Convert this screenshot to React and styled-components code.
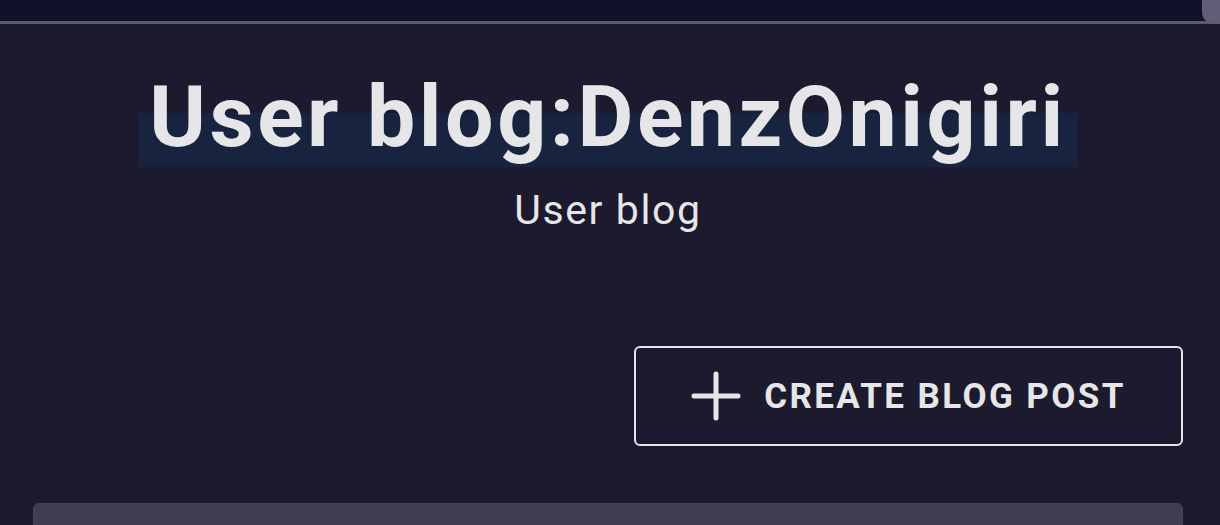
import React from "react";
import styled, { createGlobalStyle } from "styled-components";

const GlobalStyle = createGlobalStyle`
  html, body {
    margin: 0;
    padding: 0;
    background: #1b1a2e;
    font-family: Roboto, "Liberation Sans", sans-serif;
    color: #e6e6e8;
    overflow: hidden;
  }
`;

const Page = styled.div`
  position: relative;
  height: 525px;
  overflow: hidden;
  background: #1b1a2e;
`;

const TopBar = styled.div`
  height: 21px;
  background: #10102a;
  border-bottom: 3px solid #5a596f;
`;

const CornerTab = styled.div`
  position: absolute;
  top: 0;
  right: 0;
  width: 18px;
  height: 23px;
  background: #5f5e76;
  border-bottom-left-radius: 10px;
`;

const Main = styled.main`
  display: flex;
  flex-direction: column;
  padding: 0 37px 0 33px;
`;

const Header = styled.header`
  display: flex;
  flex-direction: column;
  align-items: center;
  margin-top: 42px;
`;

const Title = styled.h1`
  margin: 0;
  display: inline-block;
  padding: 0 10px;
  font-size: 86px;
  line-height: 101px;
  font-weight: 700;
  letter-spacing: 3.5px;
  color: #e6e6e8;
  background: linear-gradient(to bottom, transparent 47px, #17233f 47px);
`;

const Subtitle = styled.div`
  margin-top: 19px;
  font-size: 41px;
  line-height: 48px;
  font-weight: 400;
  letter-spacing: 1.6px;
  color: #e6e6e8;
`;

const Actions = styled.div`
  display: flex;
  justify-content: flex-end;
  margin-top: 112px;
`;

const CreateButton = styled.button`
  box-sizing: border-box;
  width: 549px;
  height: 100px;
  display: flex;
  align-items: center;
  justify-content: center;
  gap: 23px;
  background: transparent;
  border: 2px solid #e6e6e8;
  border-radius: 6px;
  color: #e6e6e8;
  font-family: Roboto, "Liberation Sans", sans-serif;
  font-size: 35px;
  font-weight: 700;
  letter-spacing: 2.4px;
  cursor: pointer;
`;

const Card = styled.div`
  margin-top: 57px;
  height: 60px;
  background: #3f3d51;
  border: 1px solid #46445a;
  border-radius: 6px;
`;

const PlusIcon = () => (
  <svg width="50" height="50" viewBox="0 0 50 50" fill="none">
    <path
      d="M25 3v44M3 25h44"
      stroke="#e6e6e8"
      strokeWidth="5"
      strokeLinecap="round"
    />
  </svg>
);

export default function App() {
  return (
    <Page>
      <GlobalStyle />
      <TopBar />
      <CornerTab />
      <Main>
        <Header>
          <Title>User blog:DenzOnigiri</Title>
          <Subtitle>User blog</Subtitle>
        </Header>
        <Actions>
          <CreateButton>
            <PlusIcon />
            CREATE BLOG POST
          </CreateButton>
        </Actions>
        <Card />
      </Main>
    </Page>
  );
}
